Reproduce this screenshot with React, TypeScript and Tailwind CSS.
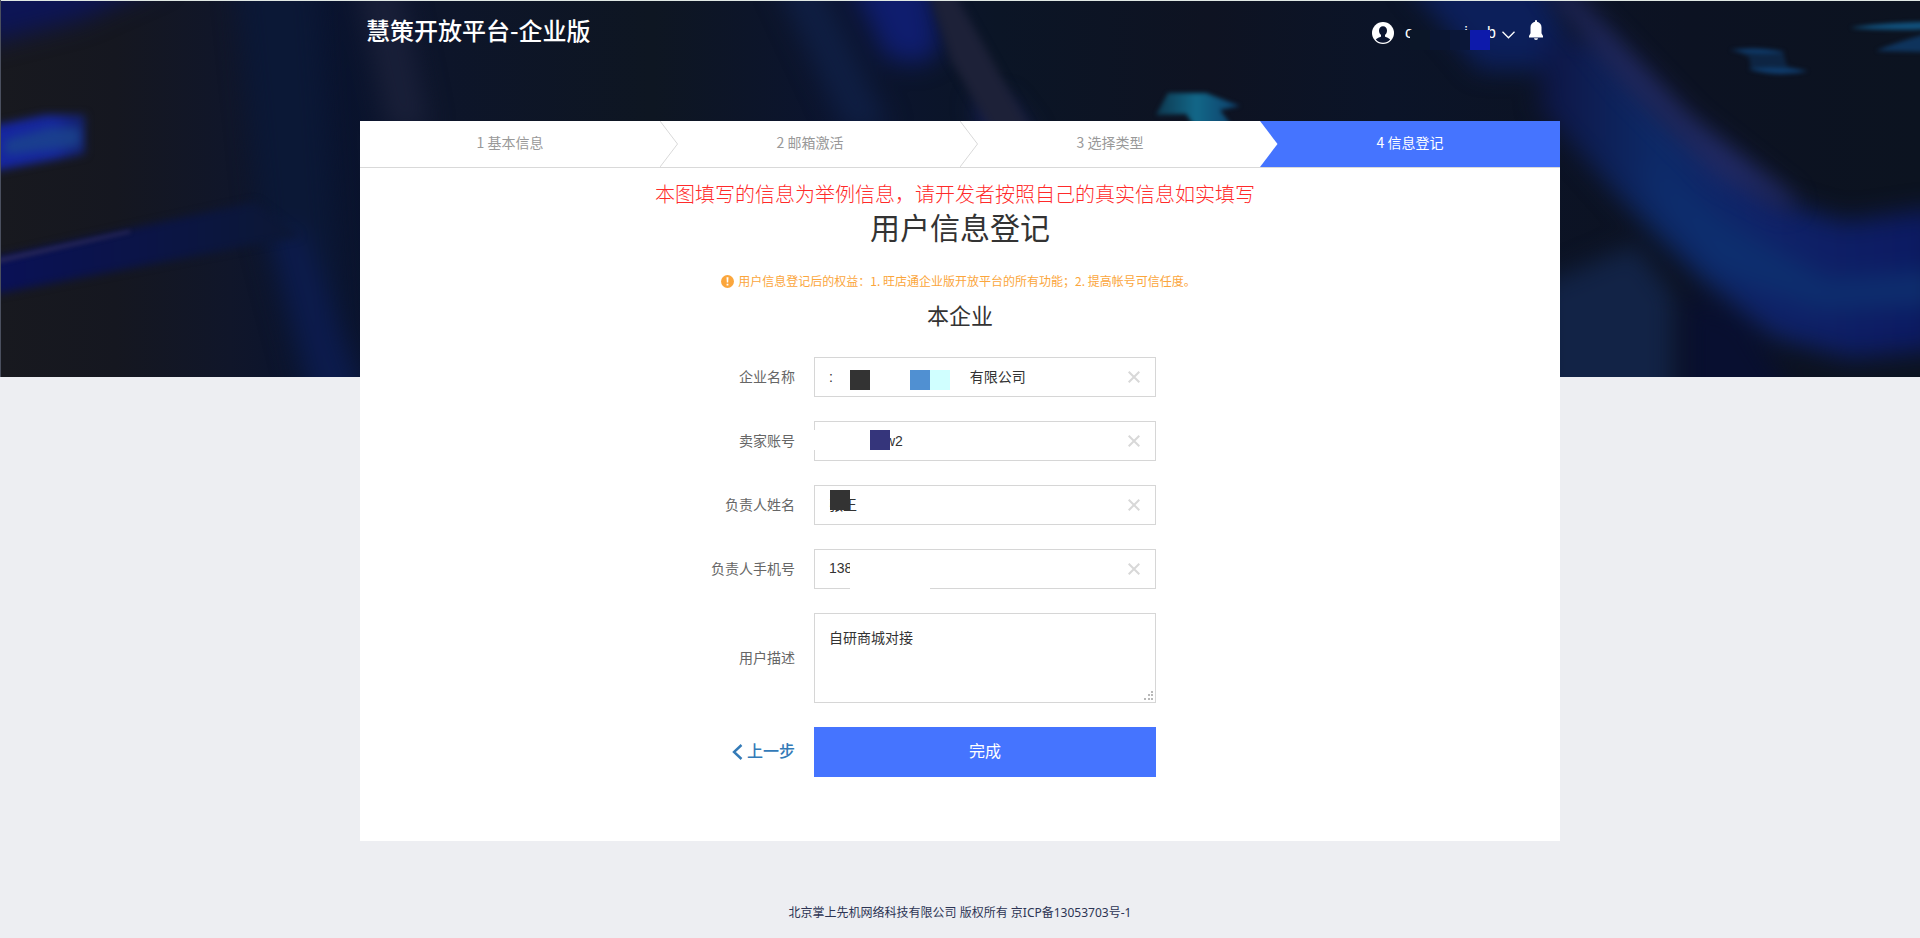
import { useState } from "react";
import type { ReactNode } from "react";

const STEPS = ["1 基本信息", "2 邮箱激活", "3 选择类型", "4 信息登记"];

function Backdrop() {
  return (
    <svg
      className="absolute inset-x-0 top-0 h-[377px] w-full"
      viewBox="0 0 1920 377"
      preserveAspectRatio="none"
      aria-hidden="true"
    >
      <defs>
        <linearGradient id="base" x1="0" x2="1" y1="0" y2="0">
          <stop offset="0" stopColor="#18191f" />
          <stop offset="0.06" stopColor="#151720" />
          <stop offset="0.12" stopColor="#10162a" />
          <stop offset="0.165" stopColor="#09132f" />
          <stop offset="0.23" stopColor="#0d152a" />
          <stop offset="0.34" stopColor="#0e1622" />
          <stop offset="0.44" stopColor="#0b1430" />
          <stop offset="0.52" stopColor="#0b1526" />
          <stop offset="0.63" stopColor="#0e1322" />
          <stop offset="0.72" stopColor="#0b1428" />
          <stop offset="0.88" stopColor="#0c1222" />
          <stop offset="1" stopColor="#0c1320" />
        </linearGradient>
        <linearGradient id="ribbon" gradientUnits="userSpaceOnUse" x1="1550" x2="1920" y1="0" y2="0">
          <stop offset="0" stopColor="#0e1747" />
          <stop offset="0.3" stopColor="#0d2a68" />
          <stop offset="0.6" stopColor="#0f2268" />
          <stop offset="1" stopColor="#0c1a62" />
        </linearGradient>
        <linearGradient id="beam" gradientUnits="userSpaceOnUse" x1="0" x2="300" y1="0" y2="0">
          <stop offset="0" stopColor="#0a1156" />
          <stop offset="0.45" stopColor="#0b1448" />
          <stop offset="1" stopColor="#0c1834" />
        </linearGradient>
        <linearGradient id="lamp" gradientUnits="userSpaceOnUse" x1="0" x2="92" y1="0" y2="0">
          <stop offset="0" stopColor="#1626a0" />
          <stop offset="0.6" stopColor="#16289a" />
          <stop offset="1" stopColor="#14205a" />
        </linearGradient>
        <linearGradient id="glint" gradientUnits="userSpaceOnUse" x1="1158" x2="1243" y1="0" y2="0">
          <stop offset="0" stopColor="#0e3a52" />
          <stop offset="0.45" stopColor="#126788" />
          <stop offset="1" stopColor="#0d3a66" />
        </linearGradient>
        <filter id="soft1" x="-30%" y="-60%" width="160%" height="220%" colorInterpolationFilters="sRGB">
          <feGaussianBlur stdDeviation="2" />
        </filter>
        <filter id="soft2" x="-30%" y="-60%" width="160%" height="220%" colorInterpolationFilters="sRGB">
          <feGaussianBlur stdDeviation="4" />
        </filter>
        <filter id="soft3" x="-30%" y="-30%" width="160%" height="160%" colorInterpolationFilters="sRGB">
          <feGaussianBlur stdDeviation="12" />
        </filter>
      </defs>
      <rect width="1920" height="377" fill="url(#base)" />

      <g filter="url(#soft3)">
        <path d="M-20-20H170L80 20-20 45Z" fill="#0d1556" />
        <path d="M236-20h80l30 417h-40L262 230Z" fill="#0b1836" />
        <path d="M270 230h34l62 170h-52Z" fill="#0c1b4c" />
        <path d="M355-20h45l30 150h-42Z" fill="#191f38" />
        <path d="M775-20h45l70 150h-45Z" fill="#0f1e42" />
        <path d="M850-20h80l10 70-20 14-34-6Z" fill="#0f1d6e" />
        <path d="M975 100l10 40h50l-30-40Z" fill="#181f58" />
      </g>
      <path d="M928-10h25l78 140h-40l-40-70Z" fill="#1d2138" filter="url(#soft2)" />
      <path d="M-20 261 255 202l45 34L-20 297Z" fill="url(#beam)" filter="url(#soft2)" />
      <path d="M-5 259 130 230v3L-5 264Z" fill="#27275a" filter="url(#soft1)" />
      <path d="M-12 127 45 115h40v39L-12 172Z" fill="url(#lamp)" filter="url(#soft2)" />
      <path d="M5 140 50 128h30v18L5 155Z" fill="#1b448c" filter="url(#soft2)" opacity="0.8" />

      <path d="M1168 93h38l34 13-20 4 12 16h-38l-8-12-30 1Z" fill="url(#glint)" filter="url(#soft1)" />

      <g filter="url(#soft3)">
        <path d="M1405-20H1540l40 80-20 10h-80Z" fill="#0c1f5a" />
        <path d="M1540 285l95-40 38 50v110H1540Z" fill="#122346" />
        <path d="M1685 290l60 30 60 90H1685Z" fill="#080f30" />
        <path
          d="M1545 40h50l75 80 110 82 65 20 95-14V350l-90 8-75-20-75-60-80-80-80-90Z"
          fill="url(#ribbon)"
        />
        <path d="M1640 160l80 60 110 60 110-10v35l-120 5-110-40Z" fill="#0d2e6e" />
      </g>
      <path
        d="M1540-20l30 10 122 128 105 82-10 12-70-36-90-90Z"
        fill="#252c68"
        filter="url(#soft3)"
        opacity="0.9"
      />

      <g filter="url(#soft1)" fill="#0f3c6c">
        <path d="M1735 50q24-3 48 2l4 14 18 5q-26 5-54-2l-2-12Z" opacity="0.45" />
        <path d="M1730 50q28-4 55 2-28 4-55-2ZM1748 69q28-4 60 2-30 7-60-2Z" />
        <path d="M1850 28q30-5 80-6v7q-40 2-80-1Z" fill="#11527e" />
        <path d="M1876 51q20-9 54-18v19Z" opacity="0.8" />
      </g>
    </svg>
  );
}

function UserIcon() {
  return (
    <svg className="size-[22px] shrink-0" viewBox="0 0 22 22" aria-hidden="true">
      <circle cx="11" cy="11" r="11" fill="#fff" />
      <path
        d="M11 4.2c2.4 0 4 1.7 4 4.2 0 2-.9 3.6-2 4.4v1.6c.2.6 4 1.3 5.2 3a9.6 9.6 0 0 1-14.4 0c1.200-1.700 5-2.400 5.200-3v-1.600c-1.100-.8-2-2.400-2-4.400 0-2.500 1.600-4.200 4-4.200Z"
        fill="#0b1530"
      />
    </svg>
  );
}

function BellIcon() {
  return (
    <svg className="h-5 w-[14px]" viewBox="0 0 14 20" fill="#fff" aria-hidden="true">
      <path d="M6 1a1 1 0 0 1 2 0v.7c2.800.5 4.500 2.700 4.500 5.500v6L14 16v1.500H0V16l1.500-2.800v-6c0-2.800 1.700-5 4.500-5.500ZM5 18.300h4a2 1.700 0 0 1-4 0Z" />
    </svg>
  );
}

function Row({ label, htmlFor, children }: { label: string; htmlFor: string; children: ReactNode }) {
  return (
    <div className="flex items-center">
      <label htmlFor={htmlFor} className="mr-[19px] w-[435px] text-right text-sm text-[#666]">
        {label}
      </label>
      <div className="relative w-[342px]">{children}</div>
    </div>
  );
}

function TextField({
  id,
  label,
  initial,
  children,
}: {
  id: string;
  label: string;
  initial: string;
  children?: ReactNode;
}) {
  const [value, setValue] = useState(initial);
  return (
    <Row label={label} htmlFor={id}>
      <input
        id={id}
        value={value}
        onChange={(e) => setValue(e.target.value)}
        className="block h-10 w-full border border-[#d6d6d6] bg-white pr-10 pb-[2px] pl-[14px] text-sm text-[#333] outline-none"
      />
      {children}
      <button
        type="button"
        aria-label="清除"
        onClick={() => setValue("")}
        className="absolute top-3 right-[14px] flex size-4 items-center justify-center"
      >
        <svg className="size-3" viewBox="0 0 12 12" stroke="#d8d8d8" strokeWidth="2" aria-hidden="true">
          <path d="M.7.7l10.600 10.600M11.300.7.7 11.300" />
        </svg>
      </button>
    </Row>
  );
}

export default function App() {
  const [desc, setDesc] = useState("自研商城对接");
  return (
    <div className="relative min-h-screen bg-[#edeef2] font-['Liberation_Sans','Noto_Sans_CJK_SC',sans-serif]">
      <Backdrop />
      <div className="relative mx-auto max-w-[1200px]">
        <header className="flex h-[121px] items-start justify-between pr-[17px] pl-[6px] text-white">
          <h1 className="mt-3 font-['Noto_Sans_CJK_SC',sans-serif] text-2xl leading-9 font-medium">
            慧策开放平台-企业版
          </h1>
          <div className="mt-[18px] flex items-center">
            <button type="button" className="flex h-[30px] items-center">
              <UserIcon />
              <span className="relative ml-[11px] flex h-6 w-[91px] items-center justify-between text-base leading-6">
                <span>c</span>
                <span className="ml-8">i</span>
                <span>b</span>
                <span className="absolute top-[9px] left-[5px] flex h-5">
                  <span className="w-5 bg-[#0b1628]" />
                  <span className="w-5 bg-[#0a1531]" />
                  <span className="w-5 bg-[#0b1738]" />
                  <span className="w-5 bg-[#0d1aab]" />
                </span>
              </span>
              <svg
                className="mt-1 ml-[6px] h-2 w-[13px]"
                viewBox="0 0 13 8"
                fill="none"
                stroke="#fff"
                strokeWidth="1.300"
                aria-hidden="true"
              >
                <path d="M.5.8l6 6 6-6" />
              </svg>
            </button>
            <button type="button" aria-label="通知" className="mb-[6px] ml-[14px]">
              <BellIcon />
            </button>
          </div>
        </header>

        <main className="bg-white pb-16">
          <ol className="grid grid-cols-4 border-b border-[#d9d9d9] font-['Noto_Sans_CJK_SC',sans-serif] text-sm">
            {STEPS.map((step, i) => {
              const active = i === STEPS.length - 1;
              return (
                <li
                  key={step}
                  aria-current={active ? "step" : undefined}
                  className={
                    active
                      ? "relative flex h-[46px] items-center justify-center bg-[#4574ff] pb-1 text-white"
                      : "relative flex h-[46px] items-center justify-center pb-1 text-[#999]"
                  }
                >
                  {i > 0 && (
                    <svg className="absolute top-0 left-0 h-[46px] w-[18px]" viewBox="0 0 18 46" aria-hidden="true">
                      <path d="M0 0l17.500 23L0 46" fill="#fff" stroke={active ? "none" : "#d9d9d9"} />
                    </svg>
                  )}
                  {step}
                </li>
              );
            })}
          </ol>

          <section className="flex flex-col items-center font-['Noto_Sans_CJK_SC',sans-serif] text-[#333]">
            <p className="mt-3 mr-[10px] text-xl leading-7 font-light text-[#ff2a2a]">
              本图填写的信息为举例信息，请开发者按照自己的真实信息如实填写
            </p>
            <h2 className="text-3xl leading-9">用户信息登记</h2>
            <p className="mt-[27px] mr-[3px] flex items-center gap-1 text-xs leading-5 text-[#fba63c]">
              <svg className="size-[13px]" viewBox="0 0 13 13" aria-hidden="true">
                <circle cx="6.500" cy="6.500" r="6.500" fill="#fba63c" />
                <path d="M5.500 2.300h2l-.3 5.200H5.800ZM5.600 8.700h1.800v1.800H5.600Z" fill="#fff" />
              </svg>
              用户信息登记后的权益：1. 旺店通企业版开放平台的所有功能；2. 提高帐号可信任度。
            </p>
            <h3 className="mt-[7px] text-[22px] leading-8">本企业</h3>
          </section>

          <form className="mt-[27px] flex flex-col gap-6" onSubmit={(e) => e.preventDefault()}>
            <TextField
              id="company"
              label="企业名称"
              initial={":\u3000\u3000\u3000\u3000\u3000\u3000\u3000\u3000\u3000\u2002 有限公司"}
            >
              <span className="absolute top-[13px] left-9 flex h-5">
                <span className="mr-10 w-5 bg-[#333]" />
                <span className="w-5 bg-[#5090d2]" />
                <span className="w-5 bg-[#d0ffff]" />
              </span>
            </TextField>
            <TextField id="seller" label="卖家账号" initial={"\u3000\u3000\u3000\u3000w2"}>
              <span className="absolute top-[9px] -left-1 flex h-5">
                <span className="w-[60px] bg-white" />
                <span className="w-5 bg-[#35357b]" />
              </span>
            </TextField>
            <TextField id="owner" label="负责人姓名" initial="张王">
              <span className="absolute top-[5px] left-4 size-5 bg-[#333]" />
            </TextField>
            <TextField id="phone" label="负责人手机号" initial="138">
              <span className="absolute top-px left-9 h-10 w-20 bg-white" />
            </TextField>
            <Row label="用户描述" htmlFor="desc">
              <textarea
                id="desc"
                value={desc}
                onChange={(e) => setDesc(e.target.value)}
                className="block h-[90px] w-full resize-none border border-[#d6d6d6] bg-white px-[14px] py-[14px] text-sm text-[#333] outline-none"
              />
              <svg
                className="absolute right-[3px] bottom-[3px] size-[9px]"
                viewBox="0 0 9 9"
                fill="#b8b8b8"
                shapeRendering="crispEdges"
                aria-hidden="true"
              >
                <path d="M7 0h2v2H7ZM4 3h2v2H4ZM7 3h2v2H7ZM0 7h2v2H0ZM4 7h2v2H4ZM7 7h2v2H7Z" />
              </svg>
            </Row>
            <div className="flex items-center">
              <a
                href="#previous"
                className="mr-[19px] flex w-[435px] items-center justify-end gap-1 text-base font-medium text-[#337ab7]"
              >
                <svg
                  className="h-4 w-[11px]"
                  viewBox="0 0 11 16"
                  fill="none"
                  stroke="#337ab7"
                  strokeWidth="2.400"
                  aria-hidden="true"
                >
                  <path d="M9.500 1 2 8l7.500 7" />
                </svg>
                上一步
              </a>
              <button type="submit" className="h-[50px] w-[342px] bg-[#4574ff] text-base text-white">
                完成
              </button>
            </div>
          </form>
        </main>

        <footer className="pt-16 pb-4 text-center font-['Noto_Sans','Noto_Sans_CJK_SC',sans-serif] text-xs leading-4 text-[#2c3454]">
          北京掌上先机网络科技有限公司 版权所有 京ICP备13053703号-1
        </footer>
      </div>
      <div className="absolute inset-x-0 top-0 h-px bg-[#e0e8e4]" />
      <div className="absolute top-0 left-0 h-[377px] w-px bg-[#4a4f5e]" />
    </div>
  );
}
